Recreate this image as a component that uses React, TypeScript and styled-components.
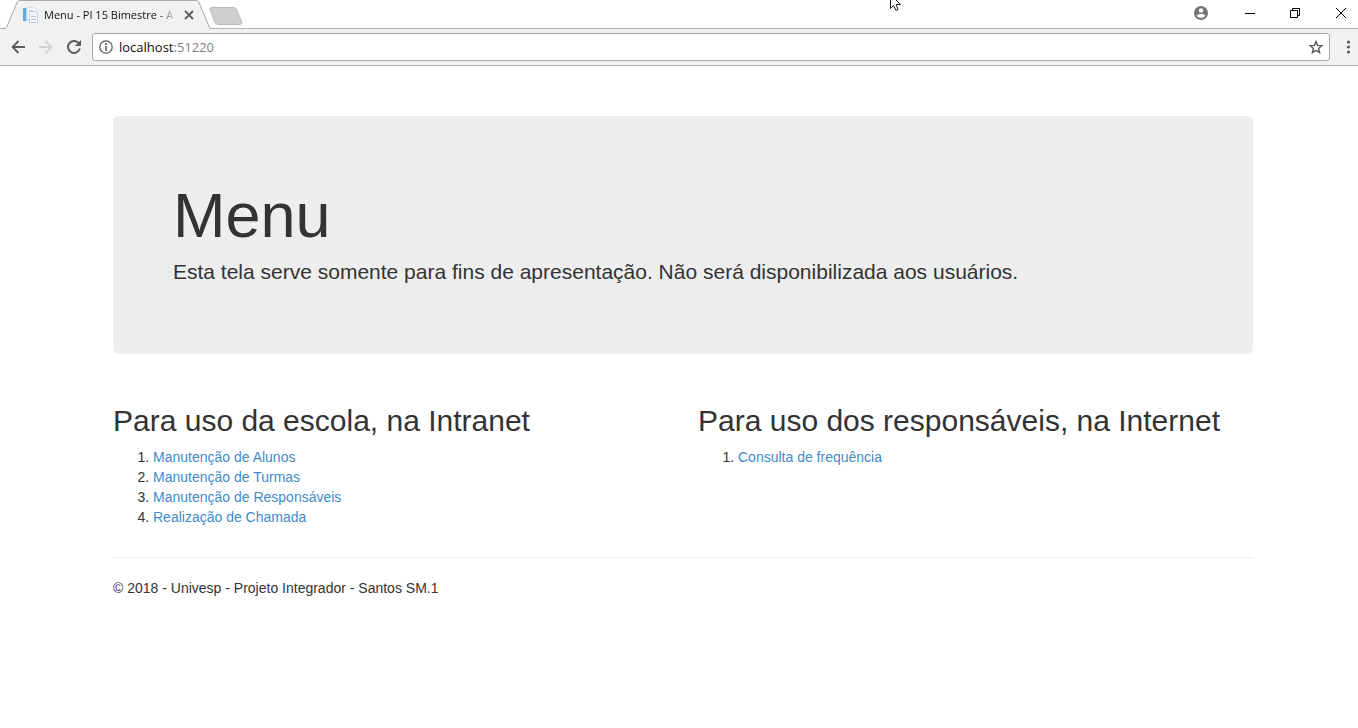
import React from "react";
import styled, { createGlobalStyle } from "styled-components";

const GlobalStyle = createGlobalStyle`
  *, *::before, *::after { box-sizing: border-box; }
  body {
    margin: 0;
    background: #fff;
    color: #333;
    font: 14px/20px "Liberation Sans", Arial, sans-serif;
  }
`;

const Browser = styled.div`
  position: relative;
  min-height: 100vh;
`;

const TabStrip = styled.div`
  display: flex;
  height: 29px;
  background: linear-gradient(#b3b3b3, #b3b3b3) bottom / 100% 1px no-repeat #fff;
`;

const Tab = styled.div`
  position: relative;
  display: flex;
  align-items: center;
  flex: none;
  width: 212px;
  height: 29px;
  padding: 0 14px 0 22px;
  color: #111;
  font: 11px/16px "Open Sans", "Noto Sans", sans-serif;
`;

const TabShape = styled.svg`
  position: absolute;
  inset: 0;
`;

const Favicon = styled.svg`
  position: relative;
  flex: none;
  margin-right: 6px;
`;

const TabTitle = styled.span`
  position: relative;
  flex: 1;
  white-space: nowrap;
  mask-image: linear-gradient(to right, #000 calc(100% - 24px), transparent calc(100% - 2px));
`;

const IconButton = styled.button<{ $width: number; $color?: string }>`
  position: relative;
  display: flex;
  flex: none;
  align-items: center;
  justify-content: center;
  width: ${(p) => p.$width}px;
  height: 28px;
  padding: 0;
  border: 0;
  background: none;
  color: ${(p) => p.$color ?? "#5a5a5a"};
`;

const WindowControls = styled.div`
  display: flex;
  margin-left: auto;
`;

const Toolbar = styled.div`
  display: flex;
  align-items: center;
  height: 37px;
  padding-left: 4px;
  border-bottom: 1px solid #b3b3b3;
  background: #f1f1f1;
`;

const AddressBar = styled.div`
  display: flex;
  flex: 1;
  align-items: center;
  height: 28px;
  margin-left: 4px;
  border: 1px solid #a9a9a9;
  border-radius: 3px;
  background: #fff;
`;

const Address = styled.div`
  flex: 1;
  color: #111;
  font: 13px/18px "Open Sans", "Noto Sans", sans-serif;
`;

const Port = styled.span`
  color: #808080;
`;

const Pointer = styled.svg`
  position: absolute;
  top: 0;
  left: 890px;
`;

const Page = styled.div`
  padding: 50px 105px 20px 113px;
`;

const Jumbotron = styled.header`
  margin-bottom: 30px;
  padding: 68px 60px;
  border-radius: 6px;
  background: #eee;
`;

const Title = styled.h1`
  margin: 0 0 10px;
  font-size: 63px;
  font-weight: 500;
  line-height: 63px;
`;

const Lead = styled.p`
  margin: 0;
  font-size: 21px;
  line-height: 29px;
`;

const Columns = styled.main`
  display: grid;
  grid-template-columns: 1fr 1fr;
  gap: 30px;
`;

const Heading = styled.h2`
  margin: 20px 0 10px;
  font-size: 30px;
  font-weight: 500;
  line-height: 33px;
`;

const Links = styled.ol`
  margin: 0 0 10px;
  padding-left: 40px;
`;

const Link = styled.a`
  color: #428bca;
  text-decoration: none;
`;

const Footer = styled.footer`
  margin-top: 20px;
  padding-top: 20px;
  border-top: 1px solid #eee;
`;

const sections = [
  {
    title: "Para uso da escola, na Intranet",
    links: [
      "Manutenção de Alunos",
      "Manutenção de Turmas",
      "Manutenção de Responsáveis",
      "Realização de Chamada",
    ],
  },
  {
    title: "Para uso dos responsáveis, na Internet",
    links: ["Consulta de frequência"],
  },
];

export default function App() {
  return (
    <Browser>
      <GlobalStyle />
      <TabStrip>
        <Tab>
          <TabShape width="212" height="29" aria-hidden="true">
            <path d="M5 29 6.500 27.500 17 2.500Q18 .500 20 .500H196Q198 .500 199 2.500L209.500 27.500 211 29Z" fill="#f1f1f1" />
            <path d="M3 28.500Q6 28.500 7 26.500L17 2.500Q18 .500 20 .500H196Q198 .500 199 2.500L209 26.500Q210 28.500 212 28.500" fill="none" stroke="#a9a9a9" />
          </TabShape>
          <Favicon width="16" height="16" aria-hidden="true">
            <path d="M5 .500H12L14.500 3V12.500H5Z" fill="#f8fafc" stroke="#d5dde5" />
            <path d="M7.500 4.500H13L15.500 7V15.500H7.500Z" fill="#f4f7fa" stroke="#c5cfd9" />
            <path d="M9 9.500H14M9 12.500H14M7 3.500H11" stroke="#b8c4cf" />
            <path d="M1 1H4V14H1Z" fill="#62ace0" />
            <path d="M4.500 1V14" stroke="#b5d5eb" />
          </Favicon>
          <TabTitle>Menu - PI 15 Bimestre - A</TabTitle>
          <IconButton $width={18} aria-label="Fechar guia">
            <svg width="10" height="10">
              <path d="m1 1 8 8m0-8-8 8" stroke="currentColor" strokeWidth="1.800" />
            </svg>
          </IconButton>
        </Tab>
        <IconButton $width={28} aria-label="Nova guia">
          <svg width="36" height="14" overflow="visible">
            <path d="M4 .500H25.500Q28 .500 29 3L33.500 14.500Q34.500 17.500 32 17.500H10.500Q8 17.500 7 15.500L2 2.500Q1.500 .500 4 .500Z" fill="#cfcfcf" stroke="#bababa" />
          </svg>
        </IconButton>
        <WindowControls>
          <IconButton $width={66} $color="#757575" aria-label="Usuário">
            <svg width="14" height="16" viewBox="0 0 14 16">
              <circle cx="7" cy="7" r="7" fill="currentColor" />
              <circle cx="7" cy="4.500" r="2.200" fill="#fff" />
              <path d="M2.800 9.800C3.500 7.500 10.500 7.500 11.200 9.800 9.500 12.500 4.500 12.500 2.800 9.800Z" fill="#fff" />
            </svg>
          </IconButton>
          <IconButton $width={32} $color="#000" aria-label="Minimizar">
            <svg width="10" height="10">
              <path d="M0 4.500H10" stroke="currentColor" />
            </svg>
          </IconButton>
          <IconButton $width={58} $color="#000" aria-label="Restaurar">
            <svg width="10" height="12">
              <path d="M.500 2.500H7.500V9.500H.500ZM2.500 2.500V.500H9.500V7.500H7.500" fill="none" stroke="currentColor" />
            </svg>
          </IconButton>
          <IconButton $width={34} $color="#000" aria-label="Fechar">
            <svg width="10" height="12" overflow="visible">
              <path d="m0 0 10 10M10 0 0 10" stroke="currentColor" />
            </svg>
          </IconButton>
        </WindowControls>
      </TabStrip>
      <Toolbar>
        <IconButton $width={28} aria-label="Voltar">
          <svg width="14" height="14">
            <path d="M14 7H1.500M7.500 1 1.500 7 7.500 13" fill="none" stroke="currentColor" strokeWidth="1.800" />
          </svg>
        </IconButton>
        <IconButton $width={28} $color="#d3d3d3" aria-label="Avançar">
          <svg width="14" height="14">
            <path d="M0 7H12.500M6.500 1 12.500 7 6.500 13" fill="none" stroke="currentColor" strokeWidth="1.800" />
          </svg>
        </IconButton>
        <IconButton $width={28} aria-label="Recarregar">
          <svg width="14" height="14">
            <path d="M11.500 3A6 6 0 1 0 12.800 8.500" fill="none" stroke="currentColor" strokeWidth="2" />
            <path d="M14 0V6H8Z" fill="currentColor" />
          </svg>
        </IconButton>
        <AddressBar>
          <IconButton $width={26} aria-label="Informações do site">
            <svg width="14" height="14">
              <circle cx="7" cy="7" r="6.200" fill="none" stroke="currentColor" strokeWidth="1.300" />
              <path d="M7 6V11M7 3V5" stroke="currentColor" strokeWidth="1.600" />
            </svg>
          </IconButton>
          <Address>
            localhost<Port>:51220</Port>
          </Address>
          <IconButton $width={26} aria-label="Adicionar aos favoritos">
            <svg width="14" height="14" viewBox="0 0 14 14">
              <path d="m7 1.500 1.600 3.900 4.200.300-3.200 2.700 1 4.100L7 10.300l-3.600 2.200 1-4.100L1.200 5.700l4.200-.300Z" fill="none" stroke="currentColor" strokeWidth="1.400" />
            </svg>
          </IconButton>
        </AddressBar>
        <IconButton $width={28} aria-label="Menu do navegador">
          <svg width="4" height="14" overflow="visible">
            <g fill="currentColor">
              <circle cx="6.500" cy="2" r="1.600" />
              <circle cx="6.500" cy="7" r="1.600" />
              <circle cx="6.500" cy="12" r="1.600" />
            </g>
          </svg>
        </IconButton>
      </Toolbar>
      <Page>
        <Jumbotron>
          <Title>Menu</Title>
          <Lead>
            Esta tela serve somente para fins de apresentação. Não será
            disponibilizada aos usuários.
          </Lead>
        </Jumbotron>
        <Columns>
          {sections.map((section) => (
            <section key={section.title}>
              <Heading>{section.title}</Heading>
              <Links>
                {section.links.map((label) => (
                  <li key={label}>
                    <Link href="#">{label}</Link>
                  </li>
                ))}
              </Links>
            </section>
          ))}
        </Columns>
        <Footer>© 2018 - Univesp - Projeto Integrador - Santos SM.1</Footer>
      </Page>
      <Pointer width="13" height="12" aria-hidden="true">
        <path d="M.500-4V8.500L3.500 5.500 6 10.500 8 9.500 6.200 4.500H10.500L2-4" fill="#fff" stroke="#1b1b26" />
      </Pointer>
    </Browser>
  );
}
